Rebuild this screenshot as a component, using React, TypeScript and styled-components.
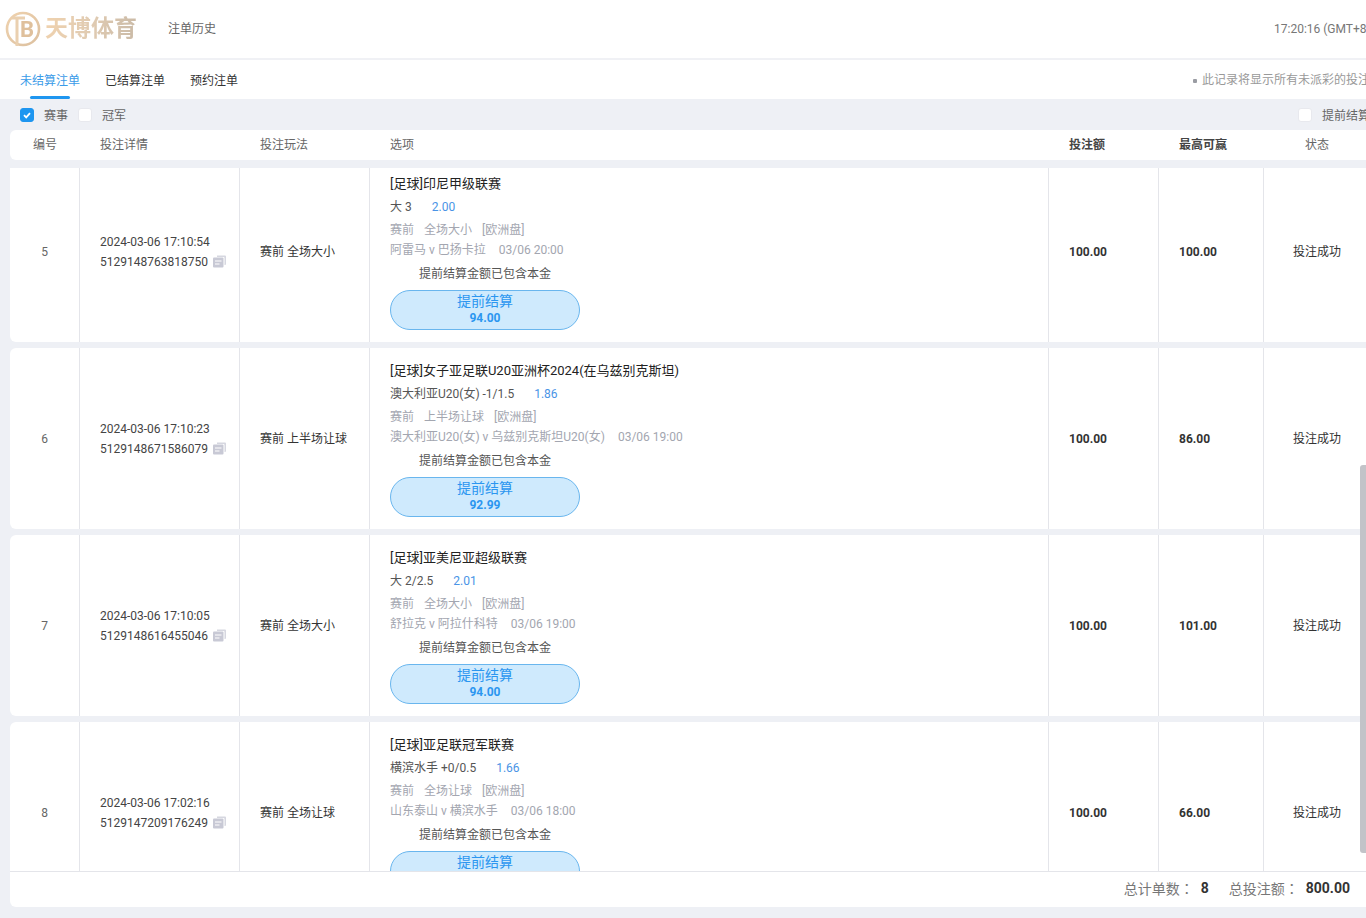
import React from "react";
import styled, { createGlobalStyle } from "styled-components";

const Global = createGlobalStyle`
  html, body { margin: 0; padding: 0; background: #eef0f5; }
  body { font-family: Roboto, "Noto Sans CJK SC", "Noto Sans", sans-serif; font-size: 12px; color: #333; }
  * { box-sizing: border-box; }
`;

const COLUMNS = "70px 160px 130px 679px 110px 105px 106px";

const Page = styled.div`
  width: 1366px;
  height: 918px;
  position: relative;
  overflow: hidden;
  display: flex;
  flex-direction: column;
  background: #eef0f5;
`;
const TopBar = styled.header`
  flex: 0 0 60px;
  display: flex;
  align-items: center;
  background: #fff;
  border-bottom: 2px solid #f0f1f5;
`;
const Logo = styled.div`
  width: 168px;
  flex: none;
  padding-left: 5px;
  display: flex;
  align-items: center;
  gap: 4px;
  filter: blur(0.6px);
`;
const LogoText = styled.span`
  font-size: 23px;
  line-height: 30px;
  font-weight: 700;
  white-space: nowrap;
  background: linear-gradient(100deg, #f0d2ae, #e0cbb2 50%, #c9b9a6);
  -webkit-background-clip: text;
  background-clip: text;
  color: transparent;
`;
const PageTitle = styled.div`
  color: #666;
  padding-bottom: 4px;
`;
const Clock = styled.div`
  margin-left: auto;
  flex: 0 0 92px;
  min-width: 0;
  white-space: nowrap;
  color: #777;
`;
const TabBar = styled.nav`
  flex: 0 0 39px;
  display: flex;
  background: #fff;
  padding-left: 20px;
  gap: 25px;
`;
const Tab = styled.div<{ $active?: boolean }>`
  position: relative;
  padding-top: 4px;
  line-height: 35px;
  color: ${(p) => (p.$active ? "#3a9be8" : "#333")};
  ${(p) =>
    p.$active &&
    `&::after {
      content: "";
      position: absolute;
      left: 10px;
      right: 10px;
      bottom: 0;
      height: 3px;
      border-radius: 2px;
      background: #1e96f0;
    }`}
`;
const TabNote = styled.div`
  margin-left: auto;
  flex: 0 0 174px;
  min-width: 0;
  white-space: nowrap;
  padding-top: 2px;
  line-height: 37px;
  color: #999;
  display: flex;
  gap: 5px;
`;
const NoteDot = styled.span`
  flex: none;
  width: 4px;
  height: 4px;
  margin-top: 17px;
  margin-left: 1px;
  border-radius: 1px;
  background: #9a9ca3;
`;
const FilterBar = styled.div`
  flex: 0 0 31px;
  display: flex;
  align-items: center;
  padding-left: 20px;
`;
const Box = styled.span<{ $checked?: boolean }>`
  width: 14px;
  height: 14px;
  flex: none;
  display: flex;
  align-items: center;
  justify-content: center;
  border-radius: 3px;
  background: ${(p) => (p.$checked ? "#1e96f0" : "#fff")};
  border: 1px solid ${(p) => (p.$checked ? "#1e96f0" : "#e8e9ee")};
`;
const FilterLabel = styled.span`
  margin-left: 10px;
  margin-right: 10px;
  color: #666;
  white-space: nowrap;
`;
const FilterRight = styled.div`
  margin-left: auto;
  flex: 0 0 68px;
  min-width: 0;
  display: flex;
  align-items: center;
`;
const HeadRow = styled.div`
  flex: 0 0 30px;
  margin-left: 10px;
  margin-bottom: 8px;
  padding-bottom: 4px;
  display: grid;
  grid-template-columns: ${COLUMNS};
  align-items: center;
  background: #fff;
  border-radius: 6px 0 0 6px;
  width: 1360px;
`;
const HeadCell = styled.div<{ $center?: boolean; $strong?: boolean }>`
  padding-left: ${(p) => (p.$center ? 0 : "20px")};
  text-align: ${(p) => (p.$center ? "center" : "left")};
  color: ${(p) => (p.$strong ? "#444" : "#666")};
  font-weight: ${(p) => (p.$strong ? 700 : 400)};
`;
const Viewport = styled.div`
  flex: 0 0 703px;
  overflow: hidden;
  margin-left: 10px;
`;
const List = styled.div`
  margin-top: -7px;
  display: flex;
  flex-direction: column;
  gap: 6px;
`;
const Row = styled.div`
  height: 181px;
  flex: none;
  width: 1360px;
  display: grid;
  grid-template-columns: ${COLUMNS};
  background: #fff;
  border-radius: 6px 0 0 6px;
`;
const Cell = styled.div<{ $center?: boolean; $cjk?: boolean }>`
  display: flex;
  flex-direction: column;
  justify-content: center;
  align-items: ${(p) => (p.$center ? "center" : "flex-start")};
  padding-left: ${(p) => (p.$center ? 0 : "20px")};
  padding-bottom: ${(p) => (p.$cjk ? "2px" : 0)};
  border-right: 1px solid #e4e5ea;
  color: #333;
  &:last-child { border-right: 0; }
`;
const IndexCell = styled(Cell)`
  color: #666;
`;
const MoneyCell = styled(Cell)`
  font-weight: 700;
  color: #333;
`;
const DetailLine = styled.div`
  display: flex;
  align-items: center;
  line-height: 20px;
  color: #444;
  white-space: nowrap;
`;
const CopyIcon = styled.svg`
  width: 13px;
  height: 13px;
  margin-left: 5px;
  flex: none;
`;
const OptionCell = styled.div`
  padding: 13px 0 0 20px;
  border-right: 1px solid #e4e5ea;
`;
const League = styled.div`
  font-size: 13px;
  line-height: 20px;
  color: #222;
  white-space: nowrap;
`;
const Pick = styled.div`
  margin-top: 3px;
  line-height: 20px;
  color: #555;
  display: flex;
  gap: 20px;
`;
const Odds = styled.span`
  color: #4a94e6;
`;
const Tags = styled.div`
  margin-top: 3px;
  line-height: 20px;
  color: #a3a6b0;
  display: flex;
  gap: 10px;
`;
const Fixture = styled.div`
  line-height: 20px;
  color: #a3a6b0;
  display: flex;
  gap: 13px;
`;
const Note = styled.div`
  width: 190px;
  margin-top: 4px;
  line-height: 20px;
  text-align: center;
  color: #555;
`;
const CashOut = styled.button`
  display: flex;
  flex-direction: column;
  align-items: center;
  justify-content: flex-start;
  width: 190px;
  height: 40px;
  margin: 6px 0 0;
  padding: 0;
  border: 1px solid #69b6ee;
  border-radius: 20px;
  background: #cfeafd;
  color: #2b96f0;
  font-family: inherit;
`;
const CashLabel = styled.div`
  font-size: 14px;
  line-height: 20px;
`;
const CashValue = styled.div`
  font-size: 12px;
  font-weight: 700;
  line-height: 14px;
`;
const Footer = styled.footer`
  flex: 0 0 36px;
  margin-left: 10px;
  padding-right: 16px;
  padding-bottom: 4px;
  display: flex;
  align-items: center;
  justify-content: flex-end;
  background: #fff;
  border-top: 1px solid #e4e5ea;
  border-radius: 0 0 0 6px;
  font-size: 14px;
  color: #777;
`;
const Colon = styled.span`
  font-family: "Noto Sans CJK TC", sans-serif;
`;
const FootValue = styled.b<{ $wide?: boolean }>`
  color: #333;
  margin-left: 7px;
  margin-right: ${(p) => (p.$wide ? 0 : "20px")};
`;
const Thumb = styled.div`
  position: absolute;
  right: 0;
  top: 465px;
  width: 6px;
  height: 388px;
  background: #c2c3c8;
  border-radius: 3px 0 0 3px;
`;

type Bet = {
  no: number; time: string; id: string; play: string; league: string; pick: string; odds: string;
  market: string; teams: string; date: string; cash: string; win: string;
};

const bets: Bet[] = [
  { no: 5, time: "2024-03-06 17:10:54", id: "5129148763818750", play: "赛前 全场大小", league: "[足球]印尼甲级联赛", pick: "大 3", odds: "2.00", market: "全场大小", teams: "阿雷马 v 巴扬卡拉", date: "03/06 20:00", cash: "94.00", win: "100.00" },
  { no: 6, time: "2024-03-06 17:10:23", id: "5129148671586079", play: "赛前 上半场让球", league: "[足球]女子亚足联U20亚洲杯2024(在乌兹别克斯坦)", pick: "澳大利亚U20(女) -1/1.5", odds: "1.86", market: "上半场让球", teams: "澳大利亚U20(女) v 乌兹别克斯坦U20(女)", date: "03/06 19:00", cash: "92.99", win: "86.00" },
  { no: 7, time: "2024-03-06 17:10:05", id: "5129148616455046", play: "赛前 全场大小", league: "[足球]亚美尼亚超级联赛", pick: "大 2/2.5", odds: "2.01", market: "全场大小", teams: "舒拉克 v 阿拉什科特", date: "03/06 19:00", cash: "94.00", win: "101.00" },
  { no: 8, time: "2024-03-06 17:02:16", id: "5129147209176249", play: "赛前 全场让球", league: "[足球]亚足联冠军联赛", pick: "横滨水手 +0/0.5", odds: "1.66", market: "全场让球", teams: "山东泰山 v 横滨水手", date: "03/06 18:00", cash: "66.00", win: "66.00" },
];

const Copy = () => (
  <CopyIcon viewBox="0 0 13 13">
    <path d="M4 0.5h8a1 1 0 0 1 1 1v7.5a1 1 0 0 1-1 1h-0.5V3a1 1 0 0 0-1-1H4z" fill="#d6d7e0" />
    <rect x="0" y="2.5" width="10.5" height="10" rx="1" fill="#c8c9d5" />
    <rect x="2" y="5.5" width="6.5" height="1" fill="#fff" />
    <rect x="2" y="8.5" width="4.5" height="1" fill="#fff" />
  </CopyIcon>
);

const LogoMark = () => (
  <svg width="36" height="38" viewBox="0 0 36 38">
    <defs>
      <linearGradient id="gold" x1="0" y1="0" x2="1" y2="1">
        <stop offset="0" stopColor="#efd2ae" />
        <stop offset="1" stopColor="#dcc09f" />
      </linearGradient>
    </defs>
    <circle cx="18" cy="19" r="16" fill="none" stroke="url(#gold)" strokeWidth="2.6" />
    <path d="M7 8h13M12 8v28" fill="none" stroke="#ead0b0" strokeWidth="3" />
    <text x="15" y="27" fontFamily="Roboto, sans-serif" fontWeight="700" fontSize="22" fill="#dfc09c">B</text>
  </svg>
);

export default function App() {
  return (
    <Page>
      <Global />
      <TopBar>
        <Logo>
          <LogoMark />
          <LogoText>天博体育</LogoText>
        </Logo>
        <PageTitle>注单历史</PageTitle>
        <Clock>17:20:16 (GMT+8:00)</Clock>
      </TopBar>
      <TabBar>
        <Tab $active>未结算注单</Tab>
        <Tab>已结算注单</Tab>
        <Tab>预约注单</Tab>
        <TabNote>
          <NoteDot />
          此记录将显示所有未派彩的投注单
        </TabNote>
      </TabBar>
      <FilterBar>
        <Box $checked>
          <svg width="10" height="10" viewBox="0 0 10 10">
            <path d="M2 5.2l2.2 2.2L8 3.2" fill="none" stroke="#fff" strokeWidth="1.8" />
          </svg>
        </Box>
        <FilterLabel>赛事</FilterLabel>
        <Box />
        <FilterLabel>冠军</FilterLabel>
        <FilterRight>
          <Box />
          <FilterLabel>提前结算</FilterLabel>
        </FilterRight>
      </FilterBar>
      <HeadRow>
        <HeadCell $center>编号</HeadCell>
        <HeadCell>投注详情</HeadCell>
        <HeadCell>投注玩法</HeadCell>
        <HeadCell>选项</HeadCell>
        <HeadCell $strong>投注额</HeadCell>
        <HeadCell $strong>最高可赢</HeadCell>
        <HeadCell $center>状态</HeadCell>
      </HeadRow>
      <Viewport>
        <List>
          {bets.map((b) => (
            <Row key={b.no}>
              <IndexCell $center>{b.no}</IndexCell>
              <Cell>
                <DetailLine>{b.time}</DetailLine>
                <DetailLine>
                  {b.id}
                  <Copy />
                </DetailLine>
              </Cell>
              <Cell $cjk>{b.play}</Cell>
              <OptionCell>
                <League>{b.league}</League>
                <Pick>
                  <span>{b.pick}</span>
                  <Odds>{b.odds}</Odds>
                </Pick>
                <Tags>
                  <span>赛前</span>
                  <span>{b.market}</span>
                  <span>[欧洲盘]</span>
                </Tags>
                <Fixture>
                  <span>{b.teams}</span>
                  <span>{b.date}</span>
                </Fixture>
                <Note>提前结算金额已包含本金</Note>
                <CashOut>
                  <CashLabel>提前结算</CashLabel>
                  <CashValue>{b.cash}</CashValue>
                </CashOut>
              </OptionCell>
              <MoneyCell>100.00</MoneyCell>
              <MoneyCell>{b.win}</MoneyCell>
              <Cell $center $cjk>投注成功</Cell>
            </Row>
          ))}
        </List>
      </Viewport>
      <Footer>
        <span>总计单数<Colon>：</Colon></span>
        <FootValue>8</FootValue>
        <span>总投注额<Colon>：</Colon></span>
        <FootValue $wide>800.00</FootValue>
      </Footer>
      <Thumb />
    </Page>
  );
}
